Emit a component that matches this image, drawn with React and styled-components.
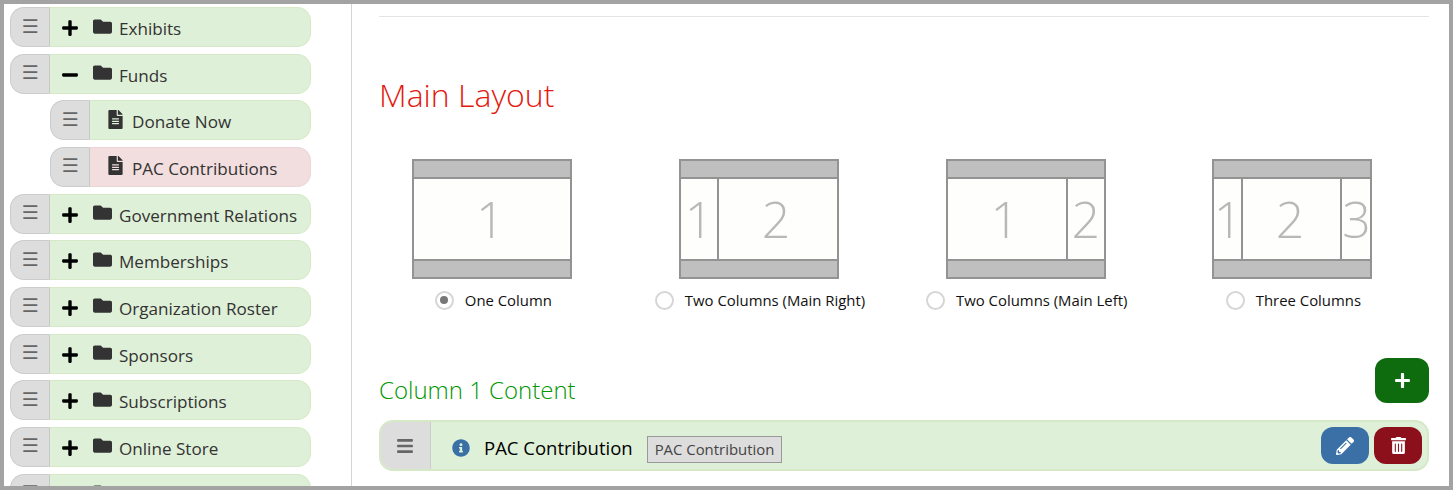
import React from 'react';
import styled, {createGlobalStyle} from 'styled-components';
import {FaFolder, FaFileAlt, FaPlus, FaMinus, FaBars, FaInfoCircle, FaPencilAlt, FaTrashAlt} from 'react-icons/fa';

const GlobalStyle = createGlobalStyle`
  html, body {
    margin: 0;
    padding: 0;
    background: #fff;
  }
  * {
    box-sizing: border-box;
  }
`;

const TREE = [
  {name: 'Exhibits', type: 'folder'},
  {name: 'Funds', type: 'folder', open: true},
  {name: 'Donate Now', type: 'page'},
  {name: 'PAC Contributions', type: 'page', active: true},
  {name: 'Government Relations', type: 'folder'},
  {name: 'Memberships', type: 'folder'},
  {name: 'Organization Roster', type: 'folder'},
  {name: 'Sponsors', type: 'folder'},
  {name: 'Subscriptions', type: 'folder'},
  {name: 'Online Store', type: 'folder'},
  {name: '', type: 'folder'},
];

const LAYOUTS = [
  {label: 'One Column', columns: [{n: 1}], checked: true},
  {label: 'Two Columns (Main Right)', columns: [{n: 1, width: 38}, {n: 2}]},
  {label: 'Two Columns (Main Left)', columns: [{n: 1}, {n: 2, width: 36}]},
  {label: 'Three Columns', columns: [{n: 1, width: 29}, {n: 2}, {n: 3, width: 28}]},
];

export default function App() {
  return (
    <Frame>
      <GlobalStyle />
      <Sidebar>
        {TREE.map((item, i) => (
          <TreeRow key={i} nested={item.type === 'page'}>
            <TreeHandle>☰</TreeHandle>
            <TreeBody active={item.active} nested={item.type === 'page'}>
              {item.type === 'folder' && (
                <Toggle>{item.open ? <FaMinus /> : <FaPlus />}</Toggle>
              )}
              <TreeIcon>{item.type === 'folder' ? <FaFolder /> : <FaFileAlt />}</TreeIcon>
              <TreeName>{item.name}</TreeName>
            </TreeBody>
          </TreeRow>
        ))}
      </Sidebar>
      <Main>
        <Rule />
        <MainTitle>Main Layout</MainTitle>
        <LayoutGrid>
          {LAYOUTS.map((layout) => (
            <LayoutOption key={layout.label}>
              <Diagram>
                <DiagramBar />
                <DiagramColumns>
                  {layout.columns.map((col) => (
                    <DiagramColumn key={col.n} width={col.width}>{col.n}</DiagramColumn>
                  ))}
                </DiagramColumns>
                <DiagramBar bottom />
              </Diagram>
              <OptionLabel>
                <Radio checked={layout.checked} />
                {layout.label}
              </OptionLabel>
            </LayoutOption>
          ))}
        </LayoutGrid>
        <ContentHeader>
          <ContentTitle>Column 1 Content</ContentTitle>
          <AddButton><FaPlus /></AddButton>
        </ContentHeader>
        <ContentRow>
          <ContentHandle><FaBars /></ContentHandle>
          <InfoIcon><FaInfoCircle /></InfoIcon>
          <ContentName>PAC Contribution</ContentName>
          <Tag>PAC Contribution</Tag>
          <RowActions>
            <ActionButton color="#3a70a6" size={18}><FaPencilAlt /></ActionButton>
            <ActionButton color="#8b101c" size={17}><FaTrashAlt /></ActionButton>
          </RowActions>
        </ContentRow>
      </Main>
    </Frame>
  );
}

const Frame = styled.div`
  display: flex;
  width: 1453px;
  height: 490px;
  overflow: hidden;
  border: 4px solid #a3a3a3;
  background: #fff;
  font-family: 'Open Sans', sans-serif;
`;

const Sidebar = styled.div`
  flex: none;
  width: 348px;
  height: 100%;
  padding: 3px 40px 0 6px;
  border-right: 1px solid #d4d4d4;
  overflow: hidden;
`;

const TreeRow = styled.div`
  display: flex;
  height: 40px;
  margin-bottom: 6.67px;
  margin-left: ${props => (props.nested ? '40px' : '0')};
`;

const TreeHandle = styled.div`
  flex: none;
  width: 40px;
  display: flex;
  align-items: center;
  justify-content: center;
  padding-bottom: 3px;
  background: #ddd;
  border: 1px solid #ccc;
  border-right-color: #c8c8c8;
  border-radius: 14px 0 0 14px;
  color: #666;
  font-family: 'DejaVu Sans', sans-serif;
  font-size: 19px;
`;

const TreeBody = styled.div`
  flex: 1;
  min-width: 0;
  display: flex;
  align-items: center;
  padding-left: ${props => (props.nested ? '16px' : '11px')};
  background: ${props => (props.active ? '#f2dede' : '#dff0d8')};
  border: 1px solid ${props => (props.active ? '#ebd5d7' : '#d6e9c6')};
  border-left: 0;
  border-radius: 0 14px 14px 0;
  color: #333;
  font-size: 17.1px;
`;

const Toggle = styled.span`
  display: flex;
  width: 18px;
  margin: 2px 14px 0 0;
  color: #000;
  font-size: 18px;
`;

const TreeIcon = styled.span`
  display: flex;
  margin-right: 7px;
  margin-top: -2px;
  color: #333;
  font-size: 19px;
`;

const TreeName = styled.span`
  margin-top: 3px;
  white-space: nowrap;
`;

const Main = styled.div`
  flex: 1;
  min-width: 0;
  padding: 12px 20px 0 27px;
`;

const Rule = styled.div`
  height: 1px;
  background: #e4e4e4;
`;

const MainTitle = styled.h1`
  margin: 55px 0 0;
  font-size: 32px;
  line-height: 46px;
  font-weight: 300;
  color: #e2190e;
`;

const LayoutGrid = styled.div`
  display: grid;
  grid-template-columns: repeat(4, 266.7px);
  margin: 41px 0 0 -20px;
`;

const LayoutOption = styled.div`
  display: flex;
  flex-direction: column;
  align-items: center;
`;

const Diagram = styled.div`
  display: flex;
  flex-direction: column;
  width: 160px;
  height: 120px;
  border: 2px solid #939393;
  background: #fefefd;
`;

const DiagramBar = styled.div`
  flex: none;
  height: 18px;
  background: #bfbfbf;
  border-${props => (props.bottom ? 'top' : 'bottom')}: 2px solid #939393;
`;

const DiagramColumns = styled.div`
  flex: 1;
  display: flex;
  min-height: 0;
`;

const DiagramColumn = styled.div`
  flex: ${props => (props.width ? `0 0 ${props.width}px` : 1)};
  display: flex;
  align-items: center;
  justify-content: center;
  padding-right: ${props => (props.width ? '0' : '4px')};
  border-right: 2px solid #939393;
  color: #b8b8b8;
  font-size: 50px;
  font-weight: 300;
  overflow: hidden;

  &:last-child {
    border-right: 0;
  }
`;

const OptionLabel = styled.div`
  display: flex;
  align-items: center;
  gap: 11px;
  height: 20px;
  margin: 11px 0 0 2px;
  color: #111;
  font-size: 14.9px;
  white-space: nowrap;
`;

const Radio = styled.span`
  flex: none;
  position: relative;
  width: 19px;
  height: 19px;
  border: 2px solid #d6d6d6;
  border-radius: 50%;
  background: #fff;

  &::after {
    content: '';
    display: ${props => (props.checked ? 'block' : 'none')};
    position: absolute;
    top: 3.5px;
    left: 3.5px;
    width: 8px;
    height: 8px;
    border-radius: 50%;
    background: #777;
  }
`;

const ContentHeader = styled.div`
  display: flex;
  align-items: flex-start;
  justify-content: space-between;
  height: 62px;
  margin-top: 48px;
`;

const ContentTitle = styled.h2`
  margin: 15px 0 0;
  font-size: 24px;
  line-height: 34px;
  font-weight: 300;
  color: #009600;
`;

const AddButton = styled.div`
  display: flex;
  align-items: center;
  justify-content: center;
  width: 54px;
  height: 45px;
  border-radius: 12px;
  background: #0e6b0e;
  color: #fff;
  font-size: 17px;
`;

const ContentRow = styled.div`
  display: flex;
  align-items: center;
  height: 51px;
  background: #dff0d8;
  border: 2px solid #d6e9c6;
  border-radius: 14px;
  overflow: hidden;
`;

const ContentHandle = styled.div`
  flex: none;
  align-self: stretch;
  display: flex;
  align-items: center;
  justify-content: center;
  width: 50px;
  padding-right: 2px;
  background: #ddd;
  border-right: 1px solid #ccc;
  color: #666;
  font-size: 18px;
`;

const InfoIcon = styled.span`
  display: flex;
  margin: 4px 0 0 21px;
  color: #3a70a6;
  font-size: 18px;
`;

const ContentName = styled.span`
  margin: 4px 0 0 14px;
  color: #000;
  font-size: 18.5px;
  white-space: nowrap;
`;

const Tag = styled.span`
  margin: 8px 0 0 14px;
  padding: 0 7px;
  height: 27px;
  line-height: 24px;
  background: #ddd;
  border: 1px solid #999;
  color: #444;
  font-size: 14.9px;
  white-space: nowrap;
`;

const RowActions = styled.div`
  display: flex;
  gap: 5px;
  margin-left: auto;
  margin-right: 5px;
`;

const ActionButton = styled.div`
  display: flex;
  align-items: center;
  justify-content: center;
  width: 48px;
  height: 37px;
  border-radius: 12px;
  background: ${props => props.color};
  color: #fff;
  font-size: ${props => props.size}px;
`;
